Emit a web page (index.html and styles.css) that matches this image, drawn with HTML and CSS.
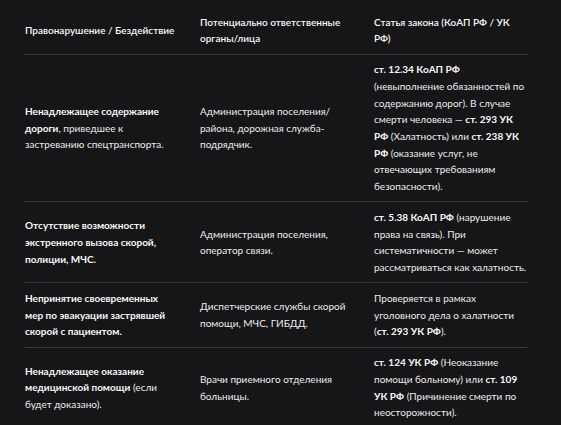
FILE: index.html
```html
<!DOCTYPE html>
<html lang="ru">
<head>
<meta charset="utf-8">
<link rel="stylesheet" href="styles.css">
</head>
<body>
<div class="wrap">
<table class="law">
  <colgroup>
    <col class="c1"><col class="c2"><col class="c3">
  </colgroup>
  <thead>
    <tr>
      <th class="nowrap">Правонарушение / Бездействие</th>
      <th>Потенциально ответственные органы/лица</th>
      <th>Статья закона (КоАП РФ / УК РФ)</th>
    </tr>
  </thead>
  <tbody>
    <tr>
      <td><strong>Ненадлежащее содержание дороги</strong>, приведшее к застреванию спецтранспорта.</td>
      <td>Администрация поселения/ района, дорожная служба-подрядчик.</td>
      <td><strong>ст. 12.34 КоАП РФ</strong> (невыполнение обязанностей по содержанию дорог). В случае смерти человека — <strong>ст. 293 УК РФ</strong> (Халатность) или <strong>ст. 238 УК РФ</strong> (оказание услуг, не отвечающих требованиям безопасности).</td>
    </tr>
    <tr>
      <td><strong>Отсутствие возможности экстренного вызова скорой, полиции, МЧС.</strong></td>
      <td>Администрация поселения, оператор связи.</td>
      <td><strong>ст. 5.38 КоАП РФ</strong> (нарушение права на связь). При систематичности — может рассматриваться как халатность.</td>
    </tr>
    <tr>
      <td><strong>Непринятие своевременных мер по эвакуации застрявшей скорой с пациентом.</strong></td>
      <td>Диспетчерские службы скорой помощи, МЧС, ГИБДД.</td>
      <td>Проверяется в рамках уголовного дела о халатности (<strong>ст. 293 УК РФ</strong>).</td>
    </tr>
    <tr>
      <td><strong>Ненадлежащее оказание медицинской помощи</strong> (если будет доказано).</td>
      <td>Врачи приемного отделения больницы.</td>
      <td><strong>ст. 124 УК РФ</strong> (Неоказание помощи больному) или <strong>ст. 109 УК РФ</strong> (Причинение смерти по неосторожности).</td>
    </tr>
  </tbody>
</table>
</div>
</body>
</html>
```
FILE: styles.css
```css
html, body {
  margin: 0;
  padding: 0;
  background: #161618;
}
body {
  font-family: Lato, "Liberation Sans", sans-serif;
  font-size: 10px;
  line-height: 16.7px;
  color: #ececec;
}
.wrap {
  padding: 7px 34px 0 25px;
}
.law {
  width: 502px;
  table-layout: fixed;
  border-collapse: collapse;
}
.c1 { width: 175px; }
.c2 { width: 174px; }
.c3 { width: 153px; }
.law th,
.law td {
  padding: 6.6px 0;
  text-align: left;
  vertical-align: middle;
  border-bottom: 1px solid #38383a;
}
.law th:first-child,
.law td:first-child {
  padding-right: 27px;
}
.law th:nth-child(2),
.law td:nth-child(2) {
  padding-right: 19px;
}
.law th {
  font-weight: 600;
  color: #f6f6f6;
}
.law .nowrap {
  white-space: nowrap;
}
.law strong {
  font-weight: 700;
  color: #f6f6f6;
}
```
